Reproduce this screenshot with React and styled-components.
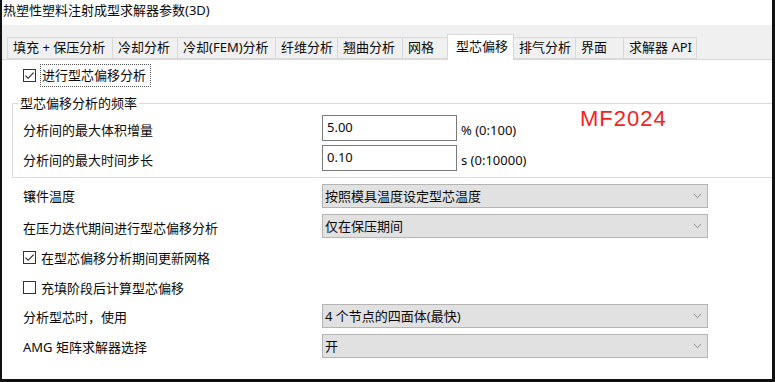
import React from "react";
import styled, { createGlobalStyle } from "styled-components";

const Global = createGlobalStyle`
  html, body { margin: 0; padding: 0; background: #fff; }
  body { font-family: "Noto Sans", "Noto Sans CJK SC", sans-serif; font-size: 13px; color: #0a0a0a; }
  * { box-sizing: border-box; }
`;

const Window = styled.div`
  width: 775px;
  height: 382px;
  border-left: 2px solid #111;
  border-right: 3px solid #111;
  border-bottom: 3px solid #111;
  background: #fff;
  display: flex;
  flex-direction: column;
  overflow: hidden;
`;

const TitleBar = styled.div`
  height: 25px;
  padding: 1px 0 0 1px;
  line-height: 18px;
  font-size: 13px;
`;

const TabStrip = styled.div`
  height: 34px;
  background: #f0f0f0;
  display: flex;
  align-items: flex-end;
  padding-left: 5px;
  position: relative;
  z-index: 1;
`;

const Tab = styled.div`
  width: ${(p) => p.$w}px;
  height: ${(p) => (p.$active ? 26 : 22)}px;
  margin-bottom: ${(p) => (p.$active ? -1 : 0)}px;
  margin-left: -1px;
  padding-left: ${(p) => (p.$active ? 8 : 5)}px;
  background: ${(p) => (p.$active ? "#fff" : "#f0f0f0")};
  border: 1px solid #d9d9d9;
  border-bottom: ${(p) => (p.$active ? "none" : "1px solid #d9d9d9")};
  line-height: ${(p) => (p.$active ? 22 : 19)}px;
  white-space: nowrap;
  font-size: 13px;
  &:first-child { margin-left: 0; }
`;

const Panel = styled.div`
  flex: 1;
  border-top: 1px solid #d9d9d9;
  padding-left: 10px;
  position: relative;
`;

const Watermark = styled.div`
  position: absolute;
  left: 578px;
  top: 46px;
  font-family: "Liberation Sans", Arial, sans-serif;
  font-size: 22px;
  line-height: 26px;
  letter-spacing: 1px;
  color: #f51d1d;
`;

const CheckRow = styled.div`
  display: flex;
  align-items: center;
  height: ${(p) => p.$h || 30}px;
  padding-left: 11px;
  padding-top: ${(p) => p.$pt || 0}px;
  margin-top: ${(p) => p.$mt || 0}px;
`;

const Box = styled.span`
  width: 13px;
  height: 13px;
  border: 1px solid #333;
  background: #fff;
  display: inline-flex;
  align-items: center;
  justify-content: center;
  flex: none;
`;

const CheckLabel = styled.span`
  margin-left: ${(p) => (p.$focus ? 4 : 5)}px;
  line-height: 18px;
  padding: ${(p) => (p.$focus ? "1px 4px 2px 1px" : "0")};
  border: ${(p) => (p.$focus ? "1px dotted #555" : "none")};
`;

const Group = styled.fieldset`
  margin: 8px 0 0 0;
  padding: 1px 0 4px 10px;
  border: 1px solid #dcdcdc;
  border-right: none;
  min-width: 0;
`;

const Legend = styled.legend`
  margin-left: -4px;
  padding: 0 2px 0 1px;
  line-height: 18px;
  font-size: 13px;
`;

const FieldRow = styled.div`
  display: grid;
  grid-template-columns: ${(p) => p.$label}px auto 1fr;
  align-items: center;
  height: 30px;
  padding-left: ${(p) => p.$pl || 0}px;
`;

const Label = styled.span`
  line-height: 18px;
  padding-top: ${(p) => p.$pt || 0}px;
  white-space: nowrap;
`;

const TextBox = styled.div`
  width: 135px;
  height: 26px;
  border: 1px solid #7a7a7a;
  background: #fff;
  padding-left: 4px;
  line-height: 23px;
`;

const Suffix = styled.span`
  margin-left: 4px;
  padding-top: 3px;
  white-space: nowrap;
`;

const Select = styled.div`
  width: 386px;
  height: 24px;
  border: 1px solid #b4b4b4;
  background: #e1e1e1;
  display: flex;
  align-items: center;
  justify-content: space-between;
  padding: 0 5px 0 2px;
  line-height: 18px;
  white-space: nowrap;
`;

const Sections = styled.div`
  margin-top: 3px;
`;

const Check = ({ checked }) => (
  <Box>
    {checked && (
      <svg width="11" height="11" viewBox="0 0 11 11">
        <path d="M1.5 5.6 L4.2 8.3 L9.6 2.6" fill="none" stroke="#222" strokeWidth="1.1" />
      </svg>
    )}
  </Box>
);

const Chevron = () => (
  <svg width="9" height="6" viewBox="0 0 9 6">
    <path d="M0.8 1 L4.5 4.6 L8.2 1" fill="none" stroke="#8a8a8a" strokeWidth="1" />
  </svg>
);

const tabs = [
  ["填充 + 保压分析", 106],
  ["冷却分析", 66],
  ["冷却(FEM)分析", 99],
  ["纤维分析", 63],
  ["翘曲分析", 66],
  ["网格", 46],
  ["型芯偏移", 67, true],
  ["排气分析", 63],
  ["界面", 49],
  ["求解器 API", 74],
];

const SelectRow = ({ label, value, pt }) => (
  <FieldRow $label={299} $pl={11}>
    <Label $pt={pt}>{label}</Label>
    <Select>
      <span>{value}</span>
      <Chevron />
    </Select>
  </FieldRow>
);

export default function App() {
  return (
    <>
      <Global />
      <Window>
        <TitleBar>热塑性塑料注射成型求解器参数(3D)</TitleBar>
        <TabStrip>
          {tabs.map(([t, w, a]) => (
            <Tab key={t} $w={w} $active={a}>
              {t}
            </Tab>
          ))}
        </TabStrip>
        <Panel>
          <CheckRow $h={21} $mt={5}>
            <Check checked />
            <CheckLabel $focus>进行型芯偏移分析</CheckLabel>
          </CheckRow>
          <Group>
            <Legend>型芯偏移分析的频率</Legend>
            <FieldRow $label={299}>
              <Label $pt={3}>分析间的最大体积增量</Label>
              <TextBox>5.00</TextBox>
              <Suffix>% (0:100)</Suffix>
            </FieldRow>
            <FieldRow $label={299}>
              <Label $pt={3}>分析间的最大时间步长</Label>
              <TextBox>0.10</TextBox>
              <Suffix>s (0:10000)</Suffix>
            </FieldRow>
          </Group>
          <Watermark>MF2024</Watermark>
          <Sections>
            <SelectRow label="镶件温度" value="按照模具温度设定型芯温度" />
            <SelectRow label="在压力迭代期间进行型芯偏移分析" value="仅在保压期间" pt={3} />
            <CheckRow $pt={3}>
              <Check checked />
              <CheckLabel>在型芯偏移分析期间更新网格</CheckLabel>
            </CheckRow>
            <CheckRow $pt={3}>
              <Check />
              <CheckLabel>充填阶段后计算型芯偏移</CheckLabel>
            </CheckRow>
            <SelectRow label="分析型芯时，使用" value="4 个节点的四面体(最快)" pt={1} />
            <SelectRow label="AMG 矩阵求解器选择" value="开" pt={1} />
          </Sections>
        </Panel>
      </Window>
    </>
  );
}
